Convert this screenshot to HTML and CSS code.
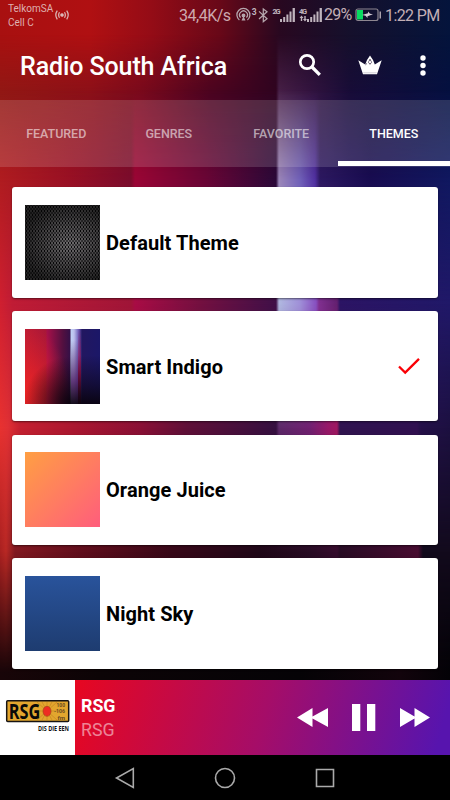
FILE: index.html
```html
<!DOCTYPE html>
<html lang="en">
<head>
<meta charset="utf-8">
<title>Radio South Africa</title>
<link rel="stylesheet" href="styles.css">
</head>
<body>
<div class="screen">
  <div class="wallpaper"><i class="row r0"></i><i class="row r1"></i><i class="row r2"></i><i class="row r3"></i><i class="row r4"></i><i class="row r5"></i><i class="row r6"></i></div>
  <div class="status">
    <div class="carrier">TelkomSA<br>Cell C</div>
    <svg class="cast" width="14" height="10" viewBox="0 0 14 10" fill="none" stroke="#ddb9b9" stroke-width="1.2"><circle cx="7" cy="5" r="1.2" fill="#ddb9b9"/><path d="M4.5 2.2Q2.8 5 4.5 7.8M9.5 2.2Q11.2 5 9.5 7.8M2.3.7Q-.7 5 2.3 9.3M11.7.7Q14.7 5 11.7 9.3"/></svg>
    <span class="speed">34,4K/s</span>
    <svg class="signals" width="88" height="18" viewBox="235 6 88 18" fill="none" stroke="#b5a6ad" stroke-width="1.25">
      <path d="M239.4 20A6.5 6.5 0 1 1 247.4 20M240.6 17.5A3.9 3.9 0 1 1 246.4 17.5"/><circle cx="243.5" cy="15.4" r="1.3" fill="#b5a6ad"/><path d="M243.5 16L241.5 20.5H245.5Z" fill="#b5a6ad" stroke="none"/>
      <path d="M259 11.4L267 18.8L263.3 21.8V9L267 11.8L259 19"/>
      <g fill="#c0b5be" stroke="none" font-family="Roboto, sans-serif" font-weight="700"><text x="251.7" y="15.2" font-size="8.500">3</text><text x="272.5" y="13.8" font-size="7.500" textLength="8">2G</text><text x="299" y="13.8" font-size="7.500" textLength="8">4G</text>
      <path d="M280 19h2v3h-2zM283.2 17h2v5h-2zM286.4 14.500h2v7.500h-2zM289.500 11.500h2v10.500h-2zM292.600 8h2.300v14h-2.300zM307 19h2v3h-2zM310.200 17h2v5h-2zM313.400 14.500h2v7.500h-2zM316.500 11.500h2v10.500h-2zM319.600 8h2.300v14h-2.300z"/>
      <path d="M299.500 18l2-2.500 2 2.500h-1.300v3h-1.400v-3zM303 19h1.300v-3h1.400v3h1.300l-2 2.500z"/></g>
    </svg>
    <span class="percent">29%</span>
    <svg class="battery" width="27" height="14" viewBox="0 0 27 14"><rect x="1" y="1" width="22" height="11.500" rx="2" fill="none" stroke="#8e8791" stroke-width="1.200"/><path d="M2 2h6v9.500H2z" fill="#07da60"/><path d="M24.500 3.500h1.500v7h-1.500z" fill="#aaa1ac"/><path d="M7 7L13 5.200V3.600L15 5.800 18 6.300 12.500 8.300V10L10.500 7.700Z" fill="#d5cdd7"/></svg>
    <span class="clock">1:22 PM</span>
  </div>
  <header class="appbar">
    <h1>Radio South Africa</h1>
    <svg class="search" width="24" height="24" viewBox="0 0 24 24" fill="none" stroke="#fff"><circle cx="9" cy="9" r="6.700" stroke-width="2.700"/><path d="M14 14L21.800 21.800" stroke-width="3.300"/></svg>
    <svg class="crown" width="24" height="20" viewBox="0 0 24 20"><path d="M.3 5.200L7.200 9.500 9 5 12 .5 15 5 16.800 9.500 23.700 5.200 19 19.300H5Z" fill="#fff"/><path d="M12 4.200L10.500 7.300 12 9.300 13.500 7.300ZM7.500 9.800L9 8.400" fill="none" stroke="#281636" stroke-width=".7"/><circle cx="12" cy="7" r=".9" fill="#fff"/><path d="M5.300 17.800h13.400" stroke="#d0cdd5"/></svg>
    <svg class="more" width="6" height="22" viewBox="0 0 6 22" fill="#fff"><circle cx="3" cy="3" r="2.700"/><circle cx="3" cy="10.500" r="2.700"/><circle cx="3" cy="18" r="2.700"/></svg>
  </header>
  <nav class="tabs"><span>FEATURED</span><span>GENRES</span><span>FAVORITE</span><span class="active">THEMES</span></nav>
  <main class="list">
    <section class="card"><div class="thumb mesh"></div><h2>Default Theme</h2></section>
    <section class="card"><div class="thumb indigo"></div><h2>Smart Indigo</h2><svg class="check" width="24" height="18" viewBox="0 0 24 18"><path d="M2 9.500L8.200 15.600 22 1.900" fill="none" stroke="#fa0006" stroke-width="2.300"/></svg></section>
    <section class="card"><div class="thumb orange"></div><h2>Orange Juice</h2></section>
    <section class="card"><div class="thumb night"></div><h2>Night Sky</h2></section>
  </main>
  <footer class="player">
    <div class="logo">
      <svg width="75" height="75" viewBox="0 0 75 75" font-family="Open Sans, sans-serif" font-weight="700">
        <rect x="6.700" y="20.800" width="62" height="20.800" rx="1" fill="#e2a62e" stroke="#171413" stroke-width="1.500"/>
        <g stroke="#b9791d" stroke-width=".5"><path d="M37 22L57 40M57 22L37 40M47 22V40M34 31H60M42 22L52 40M52 22L42 40"/></g>
        <text x="8.700" y="38.600" font-size="20.500" textLength="31.500" lengthAdjust="spacingAndGlyphs" fill="#090909">RSG</text>
        <ellipse cx="47" cy="31.300" rx="4" ry="5" fill="#ee2d22" stroke="#a64519" stroke-width=".7"/>
        <g fill="#6b4a21" font-family="Roboto, sans-serif" font-size="5"><text x="56.500" y="26.800" textLength="8.500" lengthAdjust="spacingAndGlyphs">100</text><text x="54" y="33.400" textLength="11" lengthAdjust="spacingAndGlyphs">-106</text><text x="57.500" y="40" textLength="7.500" lengthAdjust="spacingAndGlyphs">fm</text></g>
        <text x="38" y="51.300" font-size="6.600" textLength="31" lengthAdjust="spacingAndGlyphs" fill="#111">DIS DIE EEN</text>
      </svg>
    </div>
    <div class="track"><b>RSG</b><span>RSG</span></div>
    <svg class="controls" width="134" height="30" viewBox="297 703 134 30" fill="#fff"><path d="M297 717.500L312.500 708V716.500L328 708V727L312.500 718.500V727ZM352 704h8.300v27H352zM367 704h8.300v27H367zM400 708L414.500 716.500V708L430 717.500 414.500 727V718.500L400 727Z"/></svg>
  </footer>
  <div class="softkeys">
    <svg width="24" height="24" viewBox="0 0 24 24"><path d="M20.300 2.500V21.500L3.500 12Z"/></svg>
    <svg width="24" height="24" viewBox="0 0 24 24"><circle cx="12" cy="12" r="9.500"/></svg>
    <svg width="24" height="24" viewBox="0 0 24 24"><path d="M3.500 3.500h17v17h-17z"/></svg>
  </div>
</div>
</body>
</html>
```
FILE: styles.css
```css
* { box-sizing: border-box; }
body { margin: 0; font-family: Roboto, sans-serif; background: #000; }
.screen { position: relative; isolation: isolate; width: 450px; height: 800px; display: flex; flex-direction: column; overflow: hidden; }
svg { display: block; flex: none; }

/* Wallpaper: colour rows that fade into each other down the screen */
.wallpaper { position: absolute; inset: 0; z-index: -1; }
.row { position: absolute; inset: 0; }
.r0 { background: linear-gradient(90deg, #a81010, #b01012 90px, #950c16 150px, #680818 220px, #280820 280px, #15102c 350px, #04143c); }
.r1 { background: linear-gradient(90deg, #901814, #8a1018 90px, #780a1c 140px, #4a0420 210px, #300420 276px, #482048 279px, #341440 310px, #180c38 350px, #051040); -webkit-mask-image: linear-gradient(transparent 35px, #000 95px); mask-image: linear-gradient(transparent 35px, #000 95px); }
.r2 { background: linear-gradient(90deg, #b01c20, #981024 70px, #7a0c2c 131px, #9a0535 135px, #6a0535 205px, #2a0838 276px, #9a85b8 279px, #7060b8 300px, #5030a0 315px, #2c1860 320px, #180c50 370px, #101860); -webkit-mask-image: linear-gradient(transparent 90px, #000 180px); mask-image: linear-gradient(transparent 90px, #000 180px); }
.r3 { background: linear-gradient(90deg, #d02030, #c01c35 12px, #a01538 131px, #a80c45 135px, #741040 200px, #401048 276px, #b0b8e0 279px, #a090d8 300px, #8850c0 316px, #803090 319px, #642070 337px, #2c1464 340px, #201868); -webkit-mask-image: linear-gradient(transparent 180px, #000 304px); mask-image: linear-gradient(transparent 180px, #000 304px); }
.r4 { background: linear-gradient(90deg, #e83230, #e03034 8px, #c42030 20px, #a81630 80px, #8a1035 140px, #601038 185px, #351040 276px, #5c2868 279px, #702070 310px, #981868 328px, #a01860 337px, #301450 340px, #301050 417px, #241048 421px, #1c1040); -webkit-mask-image: linear-gradient(transparent 304px, #000 428px); mask-image: linear-gradient(transparent 304px, #000 428px); }
.r5 { background: linear-gradient(90deg, #a82020, #b82824 6px, #801820 15px, #600e1c 80px, #380818 170px, #200818 260px, #280c24 310px, #340c2c 337px, #280c24 340px, #480c30 418px, #120a1c 423px); -webkit-mask-image: linear-gradient(transparent 428px, #000 552px); mask-image: linear-gradient(transparent 428px, #000 552px); }
.r6 { background: linear-gradient(90deg, #180508, #0c0406 100px, #050306 300px, #12040c 400px, #030206); -webkit-mask-image: linear-gradient(transparent 552px, #000 672px); mask-image: linear-gradient(transparent 552px, #000 672px); }

.status { height: 30px; display: flex; color: #c3afb5; font-size: 16px; line-height: 18px; white-space: nowrap; }
.carrier { width: 47px; margin-left: 8px; padding-top: 2px; font-size: 10px; line-height: 14px; color: #dfb0b0; }
.cast { margin-top: 10px; }
.speed { width: 56px; margin: 7px 0 0 110px; letter-spacing: -.5px; color: #cda9ae; }
.signals { margin-top: 6px; }
.percent { width: 29px; margin: 6px 0 0 1px; letter-spacing: -.8px; }
.battery { margin: 8px 0 0 2px; }
.clock { margin: 7px 0 0 3px; letter-spacing: -.6px; }

.appbar { height: 70px; display: flex; align-items: center; padding: 0 24px 0 20px; }
.appbar h1 { width: 278px; margin: 3px 0 0; color: #fff; font-size: 25px; font-weight: 500; line-height: 30px; letter-spacing: -.1px; white-space: nowrap; }
.crown { margin-left: 36px; }
.more { margin: 1px 0 0 auto; }

.tabs { height: 67px; display: grid; grid-template-columns: repeat(4, 1fr); background: rgba(255,255,255,.145); }
.tabs span { display: flex; align-items: center; justify-content: center; font-size: 12.5px; font-weight: 500; letter-spacing: -.04px; color: rgba(255,255,255,.58); border-bottom: 5px solid transparent; border-top: 5px solid transparent; }
.tabs .active { color: #fff; border-bottom-color: #fff; margin-bottom: 1px; border-top-width: 6px; }

.list { height: 513px; display: flex; flex-direction: column; gap: 13.400px; padding: 20.400px 12px 0; }
.card { height: 110.300px; flex: none; display: flex; align-items: center; padding: 0 17px 0 13px; background: #fff; border-radius: 3px; box-shadow: 0 1px 2px rgba(0,0,0,.5); }
.card h2 { flex: 1; margin: 1px 0 0 6px; font-size: 20px; font-weight: 700; line-height: 26px; letter-spacing: .07px; color: #000; }
.thumb { width: 75px; height: 75px; }
.mesh { background: radial-gradient(ellipse at 60% 52%, transparent 0, rgba(0,0,0,.68) 75%), radial-gradient(circle, #08080a 25%, transparent 50%) 0 0 / 3px 4px, radial-gradient(circle, #08080a 25%, transparent 50%) 1.500px 2px / 3px 4px, #8a8688; }
.indigo { background: linear-gradient(transparent 35%, rgba(8,2,10,.5) 75%, rgba(8,2,10,.9)) 53px 0 / 22px 75px no-repeat, linear-gradient(transparent 15%, rgba(70,20,90,.8) 70%, rgba(12,3,16,.95)) 46px 0 / 7px 75px no-repeat, radial-gradient(ellipse 48px 48px at 46px 75px, rgba(8,2,10,.95), transparent) 0 0 / 46px 75px no-repeat, radial-gradient(ellipse 45px 70px at 0 65px, rgba(250,38,32,.8), transparent), linear-gradient(transparent, #981050 60%, #501040) 53px 0 / 3px 75px no-repeat, linear-gradient(90deg, #bb1c35, #a91738 21px, #a61049 22px, #521040 38px, #351047 45px, #bfd0f5 46px, #bcc0ed 49px, #6554b2 54px, #221760 57px, #1b1768); }
.orange { background: linear-gradient(135deg, #ff9f43, #ff5d7c); }
.night { background: linear-gradient(#29539b, #1e3c70); }

.player { height: 75px; display: flex; align-items: center; background: linear-gradient(105deg, #e60721 75px, #a50d68 265px, #5714ae 440px); }
.logo { width: 75px; height: 75px; background: #fff; }
.track { flex: 1; padding: 1px 0 0 6px; display: flex; flex-direction: column; font-size: 17.800px; line-height: 24px; color: #fff; }
.track b { font-weight: 700; }
.track span { color: rgba(255,255,255,.52); }
.controls { margin-right: 19px; }
.softkeys { height: 45px; background: #000; display: flex; align-items: center; justify-content: center; gap: 76px; fill: none; stroke: #aaa; stroke-width: 1.600; }
```
